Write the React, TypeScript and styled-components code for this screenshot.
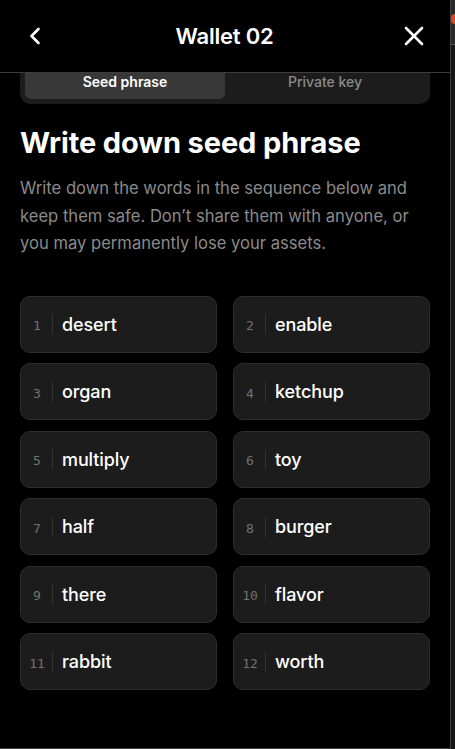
import React from "react";
import styled, { createGlobalStyle } from "styled-components";

const GlobalStyle = createGlobalStyle`
  html, body { margin: 0; padding: 0; background: #000; }
  * { box-sizing: border-box; }
  body { font-family: Inter, "Noto Sans", sans-serif; color: #fff; }
`;

const Screen = styled.div`
  display: flex;
  width: 455px;
  height: 749px;
  overflow: hidden;
  background: #000;
`;

const Panel = styled.div`
  flex: none;
  width: 451px;
  height: 749px;
  display: flex;
  flex-direction: column;
  border-right: 1px solid #3d3d3d;
  border-bottom: 1px solid #3d3d3d;
  background: #000;
`;

const Header = styled.header`
  height: 73px;
  flex: none;
  display: flex;
  align-items: center;
  justify-content: space-between;
  padding: 0 25px 0 24px;
  border-bottom: 1px solid #3d3d3d;
`;

const IconButton = styled.button`
  width: 22px;
  height: 22px;
  padding: 0;
  border: none;
  background: none;
  color: #fff;
  display: flex;
  align-items: center;
  justify-content: center;
`;

const Title = styled.h1`
  margin: 0;
  font-size: 22px;
  font-weight: 600;
  letter-spacing: -0.2px;
`;

const Body = styled.div`
  flex: 1;
  overflow: hidden;
`;

const Scroll = styled.div`
  margin-top: -14px;
  padding: 0 20px;
`;

const Tabs = styled.div`
  height: 45px;
  display: grid;
  grid-template-columns: 1fr 1fr;
  padding: 5px;
  border-radius: 10px;
  background: #1c1c1c;
`;

const Tab = styled.div<{ $active?: boolean }>`
  display: flex;
  align-items: center;
  justify-content: center;
  border-radius: 6px;
  font-size: 14px;
  font-weight: ${(p) => (p.$active ? 600 : 500)};
  color: ${(p) => (p.$active ? "#fff" : "#8a8a8a")};
  background: ${(p) => (p.$active ? "#383838" : "transparent")};
`;

const Heading = styled.h2`
  margin: 22px 0 0;
  font-size: 29px;
  line-height: 34px;
  font-weight: 700;
  letter-spacing: -0.1px;
`;

const Lead = styled.p`
  margin: 15px 0 0;
  font-size: 16.6px;
  line-height: 27.5px;
  color: #8a8a8a;
`;

const Grid = styled.div`
  margin-top: 38px;
  display: grid;
  grid-template-columns: 1fr 1fr;
  column-gap: 16px;
  row-gap: 10.6px;
`;

const WordCard = styled.div`
  height: 57px;
  display: flex;
  align-items: center;
  padding-left: 4px;
  border-radius: 10px;
  background: #1c1c1c;
  border: 1px solid #2e2e2e;
`;

const Num = styled.span`
  width: 24px;
  margin-right: 3px;
  text-align: center;
  font-family: "DejaVu Sans Mono", "Liberation Mono", monospace;
  font-size: 13px;
  color: #727272;
  padding-top: 3px;
`;

const Divider = styled.span`
  width: 1px;
  height: 20px;
  background: #333;
  margin-right: 9px;
`;

const Word = styled.span`
  font-size: 18px;
  font-weight: 500;
  color: #fff;
  letter-spacing: -0.1px;
`;

const SideStrip = styled.div`
  flex: 1;
  min-width: 0;
  overflow: hidden;
  display: flex;
  flex-direction: column;
  background: #161616;
`;

const SideTop = styled.div`
  height: 45px;
  flex: none;
  background: #2a2a2a;
  border-bottom: 1px solid #555;
  display: flex;
  align-items: center;
`;

const RedDot = styled.span`
  flex: none;
  width: 8px;
  height: 10px;
  margin-top: -6px;
  border-radius: 4px;
  background: #e0452e;
`;

const words = [
  "desert",
  "enable",
  "organ",
  "ketchup",
  "multiply",
  "toy",
  "half",
  "burger",
  "there",
  "flavor",
  "rabbit",
  "worth",
];

export default function App() {
  return (
    <>
      <GlobalStyle />
      <Screen>
        <Panel>
          <Header>
            <IconButton aria-label="Back">
              <svg width="14" height="20" viewBox="0 0 14 20" fill="none">
                <path d="M10.5 3 L3.5 10 L10.5 17" stroke="#fff" strokeWidth="2.6" strokeLinecap="round" strokeLinejoin="round" />
              </svg>
            </IconButton>
            <Title>Wallet 02</Title>
            <IconButton aria-label="Close">
              <svg width="20" height="20" viewBox="0 0 20 20" fill="none">
                <path d="M2 2 L18 18 M18 2 L2 18" stroke="#fff" strokeWidth="2.6" strokeLinecap="round" />
              </svg>
            </IconButton>
          </Header>
          <Body>
            <Scroll>
              <Tabs>
                <Tab $active>Seed phrase</Tab>
                <Tab>Private key</Tab>
              </Tabs>
              <Heading>Write down seed phrase</Heading>
              <Lead>
                Write down the words in the sequence below and keep them safe. Don’t share them with anyone, or you may
                permanently lose your assets.
              </Lead>
              <Grid>
                {words.map((w, i) => (
                  <WordCard key={w}>
                    <Num>{i + 1}</Num>
                    <Divider />
                    <Word>{w}</Word>
                  </WordCard>
                ))}
              </Grid>
            </Scroll>
          </Body>
        </Panel>
        <SideStrip>
          <SideTop>
            <RedDot />
          </SideTop>
        </SideStrip>
      </Screen>
    </>
  );
}
